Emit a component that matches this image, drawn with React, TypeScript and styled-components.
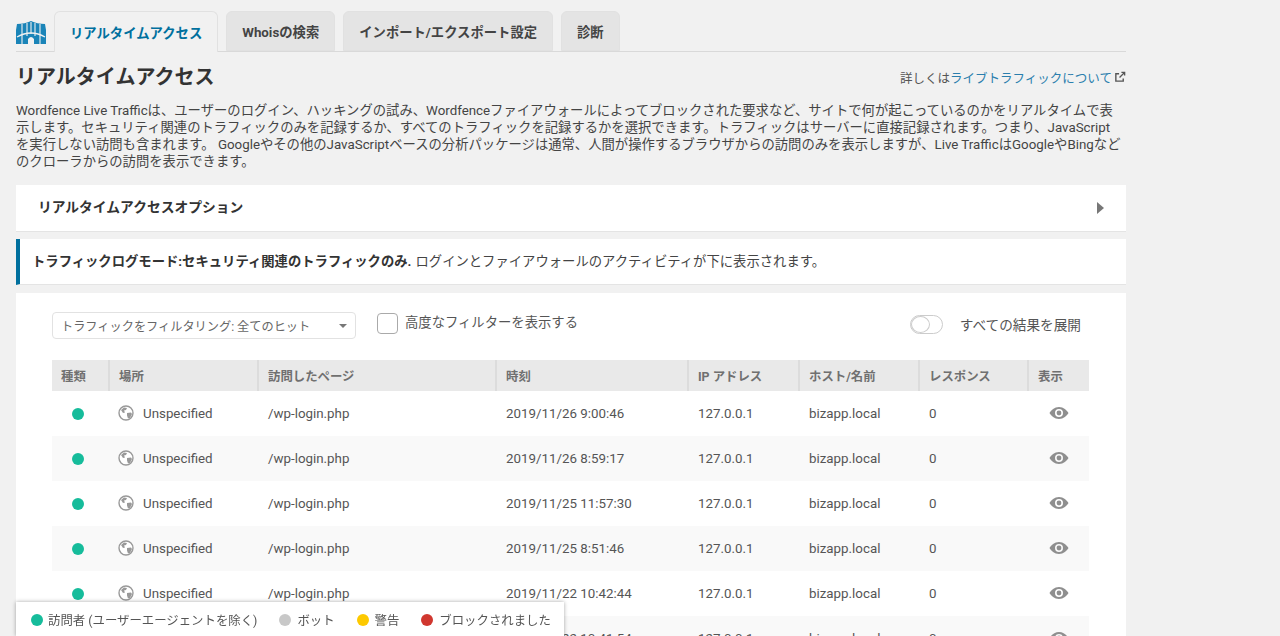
import React from "react";
import styled, { createGlobalStyle } from "styled-components";

const Global = createGlobalStyle`
  html, body { margin: 0; padding: 0; height: 636px; overflow: hidden; background: #f1f1f1; }
  body { font-family: Roboto, "Noto Sans CJK JP", sans-serif; color: #444; }
  * { box-sizing: border-box; }
`;
const Page = styled.div`
  width: 1110px;
  margin-left: 16px;
`;
const TabBar = styled.div`
  display: flex;
  align-items: flex-end;
  gap: 8px;
  height: 52px;
  padding-top: 11px;
  border-bottom: 1px solid #d9d9d9;
`;
const Logo = styled.svg`
  width: 30px;
  height: 24px;
  margin: 0 0 7px 0;
`;
const Tab = styled.div<{ $active?: boolean }>`
  height: ${(p) => (p.$active ? "41px" : "40px")};
  margin-bottom: ${(p) => (p.$active ? "-1px" : "0")};
  padding: 0 15px;
  display: flex;
  align-items: center;
  font-size: 13.33px;
  font-weight: 700;
  border: 1px solid #e1e1e1;
  border-bottom: ${(p) => (p.$active ? "none" : "1px solid #e1e1e1")};
  border-radius: 6px 6px 0 0;
  background: ${(p) => (p.$active ? "#f1f1f1" : "#e4e4e4")};
  color: ${(p) => (p.$active ? "#00709e" : "#444")};
`;
const TitleRow = styled.div`
  display: flex;
  justify-content: space-between;
  align-items: center;
  height: 50px;
`;
const Title = styled.h1`
  margin: 0;
  font-size: 20px;
  font-weight: 700;
  color: #333;
  line-height: 50px;
`;
const Help = styled.div`
  display: flex;
  align-items: center;
  gap: 2px;
  font-size: 12.5px;
  color: #555;
`;
const HelpLink = styled.span`
  color: #2a7ead;
`;
const Intro = styled.p`
  margin: 0;
  padding-right: 5px;
  height: 83px;
  font-size: 13.33px;
  line-height: 17px;
  color: #444;
`;
const Accordion = styled.div`
  height: 47px;
  background: #fff;
  display: flex;
  align-items: center;
  justify-content: space-between;
  padding: 0 22px 5px;
  font-size: 13.75px;
  font-weight: 700;
  color: #333;
  border-bottom: 1px solid #e4e4e4;
`;
const Caret = styled.span`
  width: 0;
  height: 0;
  margin: 5px 0 0;
  border-left: 7px solid #777;
  border-top: 6px solid transparent;
  border-bottom: 6px solid transparent;
`;
const Mode = styled.div`
  margin-top: 7px;
  height: 46px;
  background: #fff;
  border-left: 4px solid #00709e;
  border-bottom: 1px solid #e4e4e4;
  display: flex;
  align-items: center;
  padding: 0 0 2px 12px;
  font-size: 13.33px;
  color: #444;
`;
const Strong = styled.strong`
  color: #333;
  margin-right: 4px;
`;
const Panel = styled.div`
  margin-top: 8px;
  background: #fff;
  height: 400px;
  padding: 20px 36px;
`;
const FilterRow = styled.div`
  display: flex;
  align-items: flex-start;
  height: 47px;
`;
const Select = styled.div`
  width: 304px;
  height: 27px;
  margin-top: -1px;
  border: 1px solid #e2e2e2;
  border-radius: 4px;
  display: flex;
  align-items: center;
  justify-content: space-between;
  padding: 0 8px;
  font-size: 12.2px;
  color: #666;
`;
const SelectCaret = styled.span`
  width: 0;
  height: 0;
  border-top: 4px solid #777;
  border-left: 4px solid transparent;
  border-right: 4px solid transparent;
`;
const Check = styled.div`
  display: flex;
  align-items: center;
  gap: 7px;
  margin-left: 21px;
  font-size: 13.33px;
  color: #555;
  height: 21px;
`;
const CheckLabel = styled.span`
  margin-bottom: 5px;
`;
const CheckBox = styled.span`
  width: 21px;
  height: 21px;
  border: 1px solid #aaa;
  border-radius: 4px;
`;
const Expand = styled.div`
  margin-left: auto;
  margin-right: 9px;
  margin-top: 1px;
  display: flex;
  align-items: center;
  gap: 17px;
  font-size: 13.65px;
  color: #555;
`;
const Toggle = styled.span`
  width: 33px;
  height: 19px;
  border: 1px solid #ccc;
  border-radius: 10px;
  display: flex;
`;
const Knob = styled.span`
  width: 19px;
  height: 17px;
  border-radius: 50%;
  border: 1px solid #ccc;
  background: #fff;
`;
const Grid = styled.div`
  display: grid;
  grid-template-columns: 58px 149px 238px 192px 111px 120px 109px 60px;
  width: 1037px;
`;
const Head = styled.div`
  height: 31px;
  background: #e9e9e9;
  border-right: 2px solid #dcdcdc;
  display: flex;
  align-items: center;
  padding-left: 9px;
  font-size: 12.4px;
  font-weight: 700;
  color: #707070;
  &:nth-child(8) { border-right: none; }
`;
const Cell = styled.div<{ $alt: boolean }>`
  height: 45px;
  display: flex;
  align-items: center;
  padding: 0 0 1px 9px;
  font-size: 13.33px;
  color: #555;
  background: ${(p) => (p.$alt ? "#f9f9f9" : "#fff")};
`;
const Dot = styled.span<{ $c: string }>`
  display: inline-block;
  flex: none;
  width: 12px;
  height: 12px;
  border-radius: 50%;
  background: ${(p) => p.$c};
`;
const RowDot = styled(Dot)`
  margin: 1px 0 0 11px;
`;
const Globe = styled.svg`
  width: 16px;
  height: 16px;
  margin: 0 9px 0 -1px;
  flex: none;
`;
const Eye = styled.svg`
  width: 20px;
  height: 14px;
  margin: 0 0 1px 11px;
`;
const Legend = styled.div`
  position: fixed;
  left: 16px;
  top: 602px;
  width: 548px;
  height: 34px;
  background: #fff;
  box-shadow: 0 0 4px rgba(0, 0, 0, 0.35);
  display: flex;
  align-items: center;
  padding: 1px 0 0 15px;
  font-size: 12.4px;
  color: #555;
  white-space: nowrap;
`;
const LegendItem = styled.span`
  display: flex;
  flex: none;
  align-items: center;
  gap: 5px;
  margin-right: 22px;
  &:nth-child(n + 2) { gap: 6px; }
  &:last-child { margin-right: 0; }
`;

const rows = [
  "2019/11/26 9:00:46",
  "2019/11/26 8:59:17",
  "2019/11/25 11:57:30",
  "2019/11/25 8:51:46",
  "2019/11/22 10:42:44",
  "2019/11/22 10:41:54",
];
const heads = ["種類", "場所", "訪問したページ", "時刻", "IP アドレス", "ホスト/名前", "レスポンス", "表示"];

const GlobeIcon = () => (
  <Globe viewBox="0 0 16 16">
    <circle cx="8" cy="8" r="7" fill="#fff" stroke="#999" strokeWidth="1.4" />
    <path d="M3 5l3-2.500 3 .5-1 2-2 .5 1 2-2 .5zM9 8l4-.5 1 1.500-2 4-2 .5-1-3z" fill="#999" />
  </Globe>
);
const EyeIcon = () => (
  <Eye viewBox="0 0 20 14">
    <path fillRule="evenodd" d="M10 1c4.500 0 8 3.400 9.500 6-1.500 2.600-5 6-9.500 6S2 9.600.5 7C2 4.400 5.500 1 10 1zm0 2a4 4 0 1 0 0 8 4 4 0 0 0 0-8z" fill="#8f8f8f" />
    <circle cx="10" cy="7" r="2.400" fill="#8f8f8f" />
  </Eye>
);
const ExternalIcon = () => (
  <svg width="12" height="12" viewBox="0 0 13 13" fill="none" stroke="#555" strokeWidth="1.5">
    <path d="M10 8v3H2V3h3.500" />
    <path d="M6 7l5.500-5.500M8 1.500h3.500V5" />
  </svg>
);

export default function App() {
  return (
    <Page>
      <Global />
      <TabBar>
        <Logo viewBox="0 0 30 24">
          <path d="M1 4Q9 4 15 1Q21 4 29 4L30 10V24H18V19Q15 15 12 19V24H0V10Z" fill="#1a84b8" />
          <path d="M1 17Q15 9 29 17" stroke="#f1f1f1" strokeWidth="1.3" fill="none" />
          <path d="M6 4v20M11 3v13M15 2v12M19 3v13M24 4v20" stroke="#f1f1f1" strokeWidth="1.100" />
        </Logo>
        <Tab $active>リアルタイムアクセス</Tab>
        <Tab>Whoisの検索</Tab>
        <Tab>インポート/エクスポート設定</Tab>
        <Tab>診断</Tab>
      </TabBar>
      <TitleRow>
        <Title>リアルタイムアクセス</Title>
        <Help>
          <span>
            詳しくは<HelpLink>ライブトラフィックについて</HelpLink>
          </span>
          <ExternalIcon />
        </Help>
      </TitleRow>
      <Intro>
        Wordfence Live Trafficは、ユーザーのログイン、ハッキングの試み、Wordfenceファイアウォールによってブロックされた要求など、サイトで何が起こっているのかをリアルタイムで表示します。セキュリティ関連のトラフィックのみを記録するか、すべてのトラフィックを記録するかを選択できます。トラフィックはサーバーに直接記録されます。つまり、JavaScriptを実行しない訪問も含まれます。 Googleやその他のJavaScriptベースの分析パッケージは通常、人間が操作するブラウザからの訪問のみを表示しますが、Live TrafficはGoogleやBingなどのクローラからの訪問を表示できます。
      </Intro>
      <Accordion>
        リアルタイムアクセスオプション
        <Caret />
      </Accordion>
      <Mode>
        <Strong>トラフィックログモード:セキュリティ関連のトラフィックのみ.</Strong>
        ログインとファイアウォールのアクティビティが下に表示されます。
      </Mode>
      <Panel>
        <FilterRow>
          <Select>
            トラフィックをフィルタリング: 全てのヒット
            <SelectCaret />
          </Select>
          <Check>
            <CheckBox />
            <CheckLabel>高度なフィルターを表示する</CheckLabel>
          </Check>
          <Expand>
            <Toggle>
              <Knob />
            </Toggle>
            すべての結果を展開
          </Expand>
        </FilterRow>
        <Grid>
          {heads.map((h) => (
            <Head key={h}>{h}</Head>
          ))}
          {rows.map((t, i) => {
            const alt = i % 2 === 1;
            return (
              <React.Fragment key={t}>
                <Cell $alt={alt}>
                  <RowDot $c="#16bc9b" />
                </Cell>
                <Cell $alt={alt}>
                  <GlobeIcon />
                  Unspecified
                </Cell>
                <Cell $alt={alt}>/wp-login.php</Cell>
                <Cell $alt={alt}>{t}</Cell>
                <Cell $alt={alt}>127.0.0.1</Cell>
                <Cell $alt={alt}>bizapp.local</Cell>
                <Cell $alt={alt}>0</Cell>
                <Cell $alt={alt}>
                  <EyeIcon />
                </Cell>
              </React.Fragment>
            );
          })}
        </Grid>
      </Panel>
      <Legend>
        <LegendItem>
          <Dot $c="#16bc9b" />
          訪問者 (ユーザーエージェントを除く)
        </LegendItem>
        <LegendItem>
          <Dot $c="#c8c8c8" />
          ボット
        </LegendItem>
        <LegendItem>
          <Dot $c="#fdc900" />
          警告
        </LegendItem>
        <LegendItem>
          <Dot $c="#d0372f" />
          ブロックされました
        </LegendItem>
      </Legend>
    </Page>
  );
}
